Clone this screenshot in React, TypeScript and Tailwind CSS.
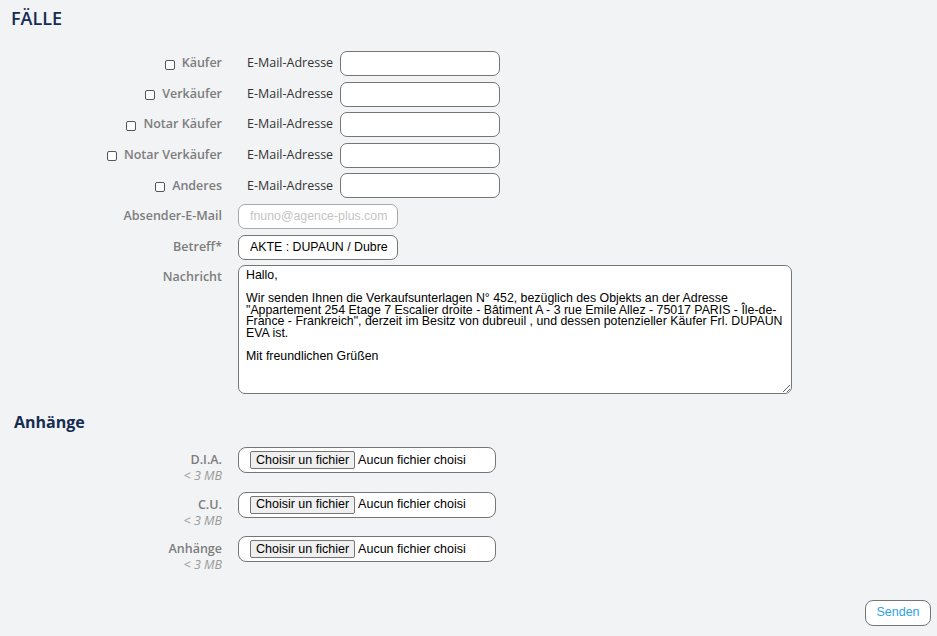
import React from 'react';

const recipients = ['Käufer', 'Verkäufer', 'Notar Käufer', 'Notar Verkäufer', 'Anderes'];
const attachments = ['D.I.A.', 'C.U.', 'Anhänge'];

const arial = "font-['Liberation_Sans',Arial,sans-serif]";
const inputCls =
  'h-[25px] bg-white border border-[#767676] rounded-[7px] pl-[11px] pr-[6px] text-[12.35px] text-black outline-none';
const labelCls = 'text-[12.5px] font-semibold text-[#7d7d7d]';

const Checkbox: React.FC = () => (
  <span className="inline-block w-[10px] h-[10px] mt-[2px] border border-[#555] rounded-[2px] bg-white mr-[7px]" />
);

const FileField: React.FC = () => (
  <div className={`w-[258px] h-[26px] bg-white border border-[#767676] rounded-[8px] flex items-center pl-[11px] text-[12.5px] text-black ${arial}`}>
    <span className="h-[18px] px-[5px] flex items-center bg-[#efefef] border border-[#767676] rounded-[2px] leading-none">
      Choisir un fichier
    </span>
    <span className="ml-[3px]">Aucun fichier choisi</span>
  </div>
);

export default function App() {
  return (
    <div className="min-h-[636px] w-[937px] bg-[#f2f3f5] font-['Open_Sans',sans-serif]">
      <h1 className="pl-[11px] pt-[5px] text-[18px] leading-[26px] font-semibold text-[#142c52]">FÄLLE</h1>

      <div className="mt-[20px] flex flex-col gap-[5.6px]">
        {recipients.map((r) => (
          <div key={r} className="flex items-center h-[25px]">
            <label className={`w-[222px] flex items-center justify-end ${labelCls}`}>
              <Checkbox />
              {r}
            </label>
            <span className="ml-[25px] w-[93px] text-[12.5px] text-[#333]">E-Mail-Adresse</span>
            <input className={`${inputCls} w-[160px] ${arial}`} />
          </div>
        ))}

        <div className="flex items-center h-[25px]">
          <label className={`w-[222px] text-right ${labelCls}`}>Absender-E-Mail</label>
          <input
            disabled
            placeholder="fnuno@agence-plus.com"
            className={`${inputCls} ml-[16px] w-[160px] bg-white placeholder:text-[#c4c4c4] border-[#a9a9a9] ${arial}`}
          />
        </div>

        <div className="flex items-center h-[25px]">
          <label className={`w-[222px] text-right ${labelCls}`}>Betreff*</label>
          <input defaultValue="AKTE : DUPAUN / Dubre" className={`${inputCls} ml-[16px] w-[160px] ${arial}`} />
        </div>

        <div className="flex items-start">
          <label className={`w-[222px] pt-[3px] text-right ${labelCls}`}>Nachricht</label>
          <textarea
            className={`ml-[16px] w-[554px] h-[129px] bg-white border border-[#767676] rounded-[7px] pl-[7px] pr-[3px] pt-[4px] text-[12.35px] leading-[11.5px] text-black outline-none ${arial}`}
            defaultValue={
              'Hallo,\n\nWir senden Ihnen die Verkaufsunterlagen N° 452, bezüglich des Objekts an der Adresse "Appartement 254 Etage 7 Escalier droite - Bâtiment A - 3 rue Emile Allez - 75017 PARIS - Île-de-France - Frankreich", derzeit im Besitz von dubreuil , und dessen potenzieller Käufer Frl. DUPAUN EVA ist.\n\nMit freundlichen Grüßen'
            }
          />
        </div>
      </div>

      <h2 className="pl-[14px] mt-[17px] text-[16px] leading-[22px] font-bold text-[#142c52]">Anhänge</h2>

      <div className="mt-[14px] flex flex-col">
        {attachments.map((a) => (
          <div key={a} className="flex items-start h-[44.5px]">
            <div className="w-[222px] text-right leading-[16px] pt-[5px]">
              <div className={labelCls}>{a}</div>
              <div className="text-[12.5px] italic text-[#999]">&lt; 3 MB</div>
            </div>
            <div className="ml-[16px]">
              <FileField />
            </div>
          </div>
        ))}
      </div>

      <div className="flex justify-end pr-[6px] mt-[19px] pb-[10px]">
        <button className={`w-[66px] h-[26px] bg-white border border-[#767676] rounded-[8px] text-[12.5px] text-[#2ea3e8] ${arial}`}>
          Senden
        </button>
      </div>
    </div>
  );
}
